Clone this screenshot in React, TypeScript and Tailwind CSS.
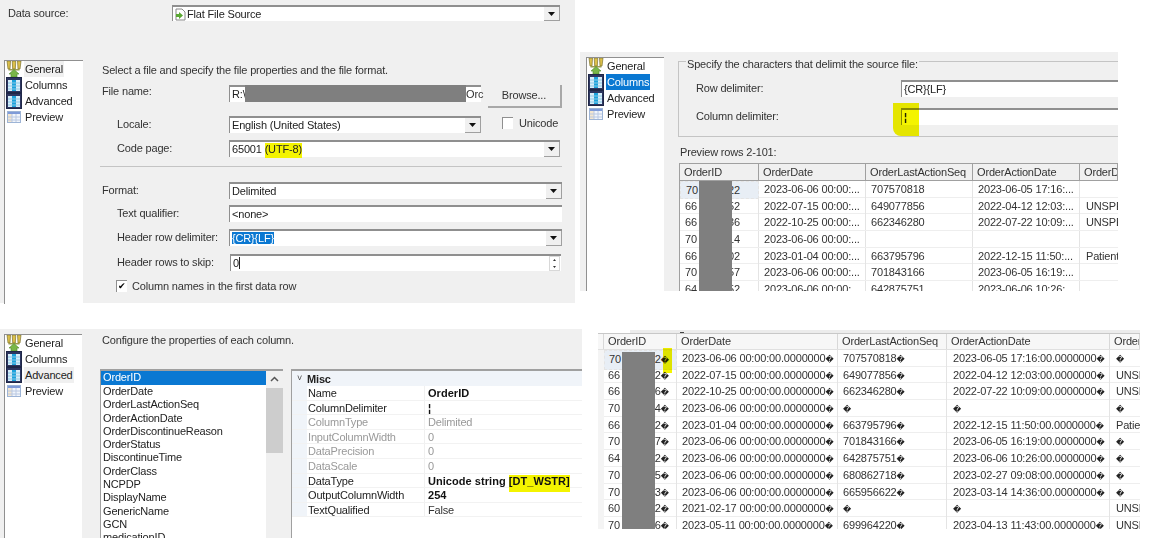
import type { ReactNode } from 'react'

const font = "font-['Liberation_Sans',Arial,sans-serif]"

function GeneralIcon() {
  return (
    <svg width="16" height="16" viewBox="0 0 16 16" className="shrink-0">
      <path d="M1 0h3.500l-.5 8H2zM6.200 0h3.600l-.5 8H6.700zM11.500 0H15l-1 8h-2z" fill="#dcc04a" stroke="#7d7330" strokeWidth="0.7" />
      <path d="M2.500 8h11v1.500h-11z" fill="#9a9a50" />
      <path d="M5 16v-3H3l5-4.500 5 4.500h-2v3z" fill="#7ab648" stroke="#4f8a2a" strokeWidth="0.6" />
    </svg>
  )
}

function ColumnsIcon() {
  return (
    <svg width="16" height="16" viewBox="0 0 16 16" className="shrink-0">
      <rect x="0.500" y="0.500" width="15" height="15" fill="#2d3660" stroke="#1f2747" />
      <rect x="2" y="3" width="12" height="11" fill="#d9eef9" />
      <rect x="6" y="3" width="4" height="11" fill="#1ba3dc" />
      <path d="M2 6h12M2 9h12M2 12h12" stroke="#8cc9e6" strokeWidth="1" />
    </svg>
  )
}

function PreviewIcon() {
  return (
    <svg width="16" height="16" viewBox="0 0 16 16" className="shrink-0">
      <rect x="1.500" y="2.500" width="13" height="11" fill="#f1f5fb" stroke="#9db4d6" />
      <rect x="2" y="3" width="12" height="2" fill="#7f9bd8" />
      <rect x="2" y="5" width="4" height="8" fill="#f3e6cf" />
      <path d="M2 8h12M2 11h12M6 5v8M10 5v8" stroke="#b9c8e2" strokeWidth="1" />
    </svg>
  )
}

function Sidebar({ active, hover, className }: { active?: string; hover?: string; className: string }) {
  const items: [string, ReactNode][] = [
    ['General', <GeneralIcon />],
    ['Columns', <ColumnsIcon />],
    ['Advanced', <ColumnsIcon />],
    ['Preview', <PreviewIcon />],
  ]
  return (
    <div className={`bg-white border-t border-l border-[#909090] ${className}`}>
      {items.map(([name, icon]) => (
        <div key={name} className="flex items-center h-4 pl-[1px]">
          {icon}
          <span
            className={`ml-[2px] px-[1px] leading-4 ${
              name === active ? 'bg-[#0a78d2] text-white' : name === hover ? 'bg-[#f0f0f0] text-[#222]' : 'text-[#222]'
            }`}
          >
            {name}
          </span>
        </div>
      ))}
    </div>
  )
}

function Arrow() {
  return (
    <span className="w-[16px] self-stretch flex items-center justify-center bg-[#f0f0f0] border-r border-b border-[#a0a0a0] shrink-0">
      <svg width="7" height="4" viewBox="0 0 7 4">
        <path d="M0 0h7L3.500 4z" fill="#111" />
      </svg>
    </span>
  )
}

function Spinner() {
  return (
    <span className="w-[11px] mr-[1px] self-stretch flex flex-col items-center justify-around border border-[#d8d8d8] shrink-0">
      <svg width="3" height="2" viewBox="0 0 3 2">
        <path d="M0 2h3L1.500 0z" fill="#333" />
      </svg>
      <svg width="3" height="2" viewBox="0 0 3 2">
        <path d="M0 0h3L1.500 2z" fill="#333" />
      </svg>
    </span>
  )
}

function Field({ children, className, arrow, spin }: { children?: ReactNode; className: string; arrow?: boolean; spin?: boolean }) {
  return (
    <div className={`flex items-center h-[17px] bg-white border-t-2 border-l border-[#8f8f8f] ${className}`}>
      <div className="flex-1 pl-[2px] whitespace-nowrap overflow-hidden text-[#222]">{children}</div>
      {arrow && <Arrow />}
      {spin && <Spinner />}
    </div>
  )
}

function FormRow({ label, indent, className, labelClass, children }: { label: string; indent?: boolean; className: string; labelClass?: string; children: ReactNode }) {
  return (
    <div className={`flex items-center ${className}`}>
      <span className={`w-[127px] shrink-0 text-[#333] ${indent ? 'pl-[15px]' : ''} ${labelClass ?? ''}`}>{label}</span>
      {children}
    </div>
  )
}

function GeneralPanel() {
  return (
    <div className="absolute left-0 top-0 w-[575px] h-[303px] bg-[#f0f0f0]">
      <div className="flex items-center pl-[8px] pt-[5px]">
        <span className="w-[164px] text-[#333]">Data source:</span>
        <div className="flex items-center w-[388px] h-[16px] bg-white border-t-2 border-l border-[#8f8f8f]">
          <svg width="13" height="13" viewBox="0 0 13 13" className="ml-[1px] shrink-0">
            <path d="M2 1h6l3 3v8H2z" fill="#fff" stroke="#888" />
            <path d="M5 4v2H2v3h3v2l4-3.500z" fill="#5aa832" />
          </svg>
          <span className="flex-1 pl-0 text-[#222]">Flat File Source</span>
          <Arrow />
        </div>
      </div>
      <div className="flex mt-[38px] pl-[4px]">
        <Sidebar hover="General" className="w-[79px] h-[244px]" />
        <div className="flex-1 pl-[19px]">
          <p className="mt-[2px] text-[#333]">Select a file and specify the file properties and the file format.</p>
          <FormRow label="File name:" labelClass="pb-[4px]" className="mt-[7px] h-[17px]">
            <div className="relative">
              <Field className="w-[252px]">R:\</Field>
              <div className="absolute left-[16px] top-0 w-[221px] h-[17px] bg-[#7f7f7f]" />
              <span className="absolute left-[237px] top-[2px] leading-[15px] text-[#333]">Orc</span>
            </div>
            <button className="ml-[7px] w-[74px] h-[23px] self-start bg-[#f0f0f0] border-r-2 border-b-2 border-[#a8a8a8] text-[#333]">
              Browse...
            </button>
          </FormRow>
          <FormRow label="Locale:" indent className="mt-[14px] h-[17px]">
            <Field arrow className="w-[252px]">English (United States)</Field>
            <span className="ml-[21px] mb-[3px] w-[11px] h-[12px] bg-white border-t border-l border-[#8f8f8f]" />
            <span className="ml-[6px] mb-[2px] text-[#333]">Unicode</span>
          </FormRow>
          <FormRow label="Code page:" indent className="mt-[7px] h-[17px]">
            <Field arrow className="w-[331px]">
              65001 <span className="bg-[#f4f400] pb-[3px]">(UTF-8)</span>
            </Field>
          </FormRow>
          <div className="mt-[9px] w-[462px] -ml-[2px] border-t border-[#c4c4c4]" />
          <FormRow label="Format:" className="mt-[15px] h-[17px]">
            <Field arrow className="w-[333px]">Delimited</Field>
          </FormRow>
          <FormRow label="Text qualifier:" indent className="mt-[6px] h-[17px]">
            <Field className="w-[333px]">&lt;none&gt;</Field>
          </FormRow>
          <FormRow label="Header row delimiter:" indent className="mt-[7px] h-[17px]">
            <Field arrow className="w-[333px]">
              <span className="bg-[#0a78d2] text-white">{'{CR}{LF}'}</span>
            </Field>
          </FormRow>
          <FormRow label="Header rows to skip:" indent className="mt-[8px] h-[17px]">
            <Field spin className="w-[331px] ml-[1px]">
              0<span className="border-l border-[#222]" />
            </Field>
          </FormRow>
          <div className="flex items-center mt-[7px] ml-[14px]">
            <span className="flex items-center justify-center w-[11px] h-[12px] bg-white border-t border-l border-[#8f8f8f] text-[9px] leading-none">
              ✔
            </span>
            <span className="ml-[5px] text-[#333]">Column names in the first data row</span>
          </div>
        </div>
      </div>
    </div>
  )
}

const previewRows = [
  ['70', '22', '2023-06-06 00:00:...', '707570818', '2023-06-05 17:16:...', ''],
  ['66', '52', '2022-07-15 00:00:...', '649077856', '2022-04-12 12:03:...', 'UNSPE'],
  ['66', '36', '2022-10-25 00:00:...', '662346280', '2022-07-22 10:09:...', 'UNSPE'],
  ['70', '14', '2023-06-06 00:00:...', '', '', ''],
  ['66', '02', '2023-01-04 00:00:...', '663795796', '2022-12-15 11:50:...', 'Patient'],
  ['70', '57', '2023-06-06 00:00:...', '701843166', '2023-06-05 16:19:...', ''],
  ['64', '52', '2023-06-06 00:00:...', '642875751', '2023-06-06 10:26:...', ''],
]

function ColumnsPanel() {
  return (
    <div className="absolute left-[580px] top-[52px] w-[538px] h-[239px] bg-[#f0f0f0] overflow-hidden">
      <div className="flex pl-[6px] pt-[5px]">
        <Sidebar active="Columns" className="w-[78px] h-[246px]" />
        <div className="flex-1 min-w-0 pl-[14px]">
          <div className="relative mt-[4px] h-[76px] border-t border-l border-b border-[#c4c4c4]">
            <span className="absolute left-[7px] -top-[4px] bg-[#f0f0f0] px-[1px] leading-[12px] text-[#333]">
              Specify the characters that delimit the source file:
            </span>
            <div className="flex items-center mt-[18px] pl-[17px] h-[17px]">
              <span className="w-[205px] text-[#333]">Row delimiter:</span>
              <Field className="flex-1">{'{CR}{LF}'}</Field>
            </div>
            <div className="flex items-center mt-[11px] pl-[17px] h-[17px]">
              <span className="w-[205px] text-[#333]">Column delimiter:</span>
              <Field className="flex-1">
                <span className="font-bold">¦</span>
              </Field>
            </div>
            <div className="absolute left-[214px] top-[41px] w-[26px] h-[33px] bg-[#f4f400] mix-blend-multiply rounded-bl-[8px]" />
          </div>
          <p className="mt-[9px] ml-[2px] leading-[13px] text-[#333]">Preview rows 2-101:</p>
          <div className="relative mt-[4px] ml-[1px] border-t border-l border-[#a0a0a0] bg-white">
            <div className="grid grid-cols-[79px_107px_107px_107px_1fr] h-[17px] bg-[#f0f0f0] border-b border-[#a0a0a0] text-[#333]">
              {['OrderID', 'OrderDate', 'OrderLastActionSeq', 'OrderActionDate', 'OrderD'].map((h) => (
                <div key={h} className="pl-[4px] border-r border-[#a0a0a0] leading-[16px] overflow-hidden whitespace-nowrap">
                  {h}
                </div>
              ))}
            </div>
            {previewRows.map((r, i) => (
              <div key={i} className="grid grid-cols-[79px_107px_107px_107px_1fr] h-[16.700px] border-b border-[#eeeeee] text-[#333] leading-[16px]">
                <div className={`flex justify-between pl-[5px] pr-[18px] border-r border-[#e4e4e4] ${i === 0 ? 'bg-[#e8eef5] border border-dashed border-[#777]' : ''}`}>
                  <span>{r[0]}</span>
                  <span>{r[1]}</span>
                </div>
                <div className="pl-[5px] border-r border-[#e4e4e4] whitespace-nowrap overflow-hidden">{r[2]}</div>
                <div className="pl-[5px] border-r border-[#e4e4e4]">{r[3]}</div>
                <div className="pl-[5px] border-r border-[#e4e4e4] whitespace-nowrap overflow-hidden">{r[4]}</div>
                <div className="pl-[6px] whitespace-nowrap overflow-hidden">{r[5]}</div>
              </div>
            ))}
            <div className="absolute left-[19px] top-[17px] w-[33px] h-[120px] bg-[#7f7f7f]" />
          </div>
        </div>
      </div>
    </div>
  )
}

const columnNames = [
  'OrderID',
  'OrderDate',
  'OrderLastActionSeq',
  'OrderActionDate',
  'OrderDiscontinueReason',
  'OrderStatus',
  'DiscontinueTime',
  'OrderClass',
  'NCPDP',
  'DisplayName',
  'GenericName',
  'GCN',
  'medicationID',
]

const props: [string, ReactNode, string, string][] = [
  ['Name', 'OrderID', 'text-[#222]', 'font-bold text-[#111] tracking-[0.05px]'],
  ['ColumnDelimiter', '¦', 'text-[#222]', 'font-bold text-[#111]'],
  ['ColumnType', 'Delimited', 'text-[#999]', 'text-[#999]'],
  ['InputColumnWidth', '0', 'text-[#999]', 'text-[#999]'],
  ['DataPrecision', '0', 'text-[#999]', 'text-[#999]'],
  ['DataScale', '0', 'text-[#999]', 'text-[#999]'],
  [
    'DataType',
    <>
      Unicode string <span className="bg-[#f4f400] pb-[5px]">[DT_WSTR]</span>
    </>,
    'text-[#222]',
    'font-bold text-[#111] tracking-[0.05px]',
  ],
  ['OutputColumnWidth', '254', 'text-[#222]', 'font-bold text-[#111] tracking-[0.05px]'],
  ['TextQualified', 'False', 'text-[#222]', 'text-[#333]'],
]

function AdvancedPanel() {
  return (
    <div className="absolute left-0 top-[329px] w-[582px] h-[209px] bg-[#f0f0f0] overflow-hidden">
      <div className="flex pl-[4px] pt-[5px]">
        <Sidebar hover="Advanced" className="w-[78px] h-[204px]" />
        <div className="flex-1 min-w-0 pl-[18px]">
          <p className="ml-[2px] leading-[13px] text-[#333]">Configure the properties of each column.</p>
          <div className="flex mt-[22px] gap-[8px] h-[171px]">
            <div className="w-[183px] flex bg-white border-t-2 border-l border-[#a0a0a0] overflow-hidden">
              <div className="flex-1 min-w-0">
                {columnNames.map((name, i) => (
                  <div key={name} className={`h-[13.300px] leading-[13px] pl-[2px] ${i === 0 ? 'bg-[#0a78d2] text-white h-[14px]' : 'text-[#222]'}`}>
                    {name}
                  </div>
                ))}
              </div>
              <div className="w-[17px] bg-[#f0f0f0] shrink-0">
                <svg width="17" height="17" viewBox="0 0 17 17">
                  <path d="M5 10l3.500-3.500L12 10" fill="none" stroke="#555" strokeWidth="1.500" />
                </svg>
                <div className="h-[65px] bg-[#cdcdcd]" />
              </div>
            </div>
            <div className="flex-1 bg-white border-t-2 border-l border-[#a0a0a0] overflow-hidden">
              <div className="flex h-[15px] pt-[1px] bg-[#f0f4f9] items-center">
                <span className="w-[15px] text-center text-[9px] text-[#444]">˅</span>
                <span className="font-bold text-[#222]">Misc</span>
              </div>
              {props.map(([name, value, nameCls, valueCls]) => (
                <div key={name} className="flex h-[14.600px] leading-[14px] border-b border-[#f2f2f2]">
                  <span className="w-[15px] bg-[#f0f4f9] shrink-0" />
                  <span className={`w-[118px] pl-[1px] border-r border-[#f0f0f0] ${nameCls}`}>{name}</span>
                  <span className={`pl-[3px] whitespace-nowrap ${valueCls}`}>{value}</span>
                </div>
              ))}
            </div>
          </div>
        </div>
      </div>
    </div>
  )
}

function Bad() {
  return <span className="font-['DejaVu_Sans'] text-[8px] text-[#222] tracking-normal">{'\uFFFD'}</span>
}

const dataRows = [
  ['70', '22', '2023-06-06 00:00:00.0000000', '707570818', '2023-06-05 17:16:00.0000000', ''],
  ['66', '52', '2022-07-15 00:00:00.0000000', '649077856', '2022-04-12 12:03:00.0000000', 'UNSPECIFIED'],
  ['66', '36', '2022-10-25 00:00:00.0000000', '662346280', '2022-07-22 10:09:00.0000000', 'UNSPECIFIED'],
  ['70', '14', '2023-06-06 00:00:00.0000000', '', '', ''],
  ['66', '02', '2023-01-04 00:00:00.0000000', '663795796', '2022-12-15 11:50:00.0000000', 'Patient'],
  ['70', '67', '2023-06-06 00:00:00.0000000', '701843166', '2023-06-05 16:19:00.0000000', ''],
  ['64', '52', '2023-06-06 00:00:00.0000000', '642875751', '2023-06-06 10:26:00.0000000', ''],
  ['70', '45', '2023-06-06 00:00:00.0000000', '680862718', '2023-02-27 09:08:00.0000000', ''],
  ['70', '23', '2023-06-06 00:00:00.0000000', '665956622', '2023-03-14 14:36:00.0000000', ''],
  ['60', '22', '2021-02-17 00:00:00.0000000', '', '', 'UNSPECIFIED'],
  ['70', '96', '2023-05-11 00:00:00.0000000', '699964220', '2023-04-13 11:43:00.0000000', 'UNSPECIFIED'],
]

function DataGrid() {
  return (
    <div className="absolute left-[598px] top-[330px] w-[542px] h-[199px] overflow-hidden bg-white">
      <div className="h-[4px] border-b border-[#c8c8c8] flex">
        <div className="w-[32px]" />
        <div className="flex-1 bg-[#ececec]">
          <div className="ml-[50px] mt-[2px] w-[4px] h-[1px] bg-[#444]" />
        </div>
      </div>
      <div className="relative">
        <div className="grid grid-cols-[6px_73px_161px_109px_163px_1fr] h-[16px] bg-[#f7f7f7] border-b border-[#e0e0e0] text-[#333] leading-[15px]">
          {['', 'OrderID', 'OrderDate', 'OrderLastActionSeq', 'OrderActionDate', 'Order'].map((h, i) => (
            <div key={i} className="pl-[4px] border-r border-[#d8d8d8] whitespace-nowrap overflow-hidden">
              {h}
            </div>
          ))}
        </div>
        {dataRows.map((r, i) => (
          <div key={i} className="grid grid-cols-[6px_73px_161px_109px_163px_1fr] h-[16.700px] border-b border-[#eeeeee] text-[#333] leading-[16px]">
            <div className="bg-[#f4f4f4]" />
            <div className={`flex justify-between pl-[4px] pr-[7px] border-r border-[#e4e4e4] ${i === 0 ? 'bg-[#e8eef5] border border-dashed border-[#777]' : ''}`}>
              <span>{r[0]}</span>
              <span>
                {r[1]}
                <Bad />
              </span>
            </div>
            <div className="pl-[5px] border-r border-[#e4e4e4] whitespace-nowrap overflow-hidden">
              {r[2]}
              <Bad />
            </div>
            <div className="pl-[5px] border-r border-[#e4e4e4] whitespace-nowrap">
              {r[3]}
              <Bad />
            </div>
            <div className="pl-[6px] border-r border-[#e4e4e4] whitespace-nowrap">
              {r[4]}
              <Bad />
            </div>
            <div className="pl-[6px] whitespace-nowrap overflow-hidden">{r[5] || <Bad />}</div>
          </div>
        ))}
        <div className="absolute left-[24px] top-[18px] w-[33px] h-[180px] bg-[#7f7f7f]" />
        <div className="absolute left-[65px] top-[14px] w-[9px] h-[25px] bg-[#f4f400] mix-blend-multiply" />
      </div>
    </div>
  )
}

export default function App() {
  return (
    <div className={`relative w-[1156px] h-[542px] bg-white overflow-hidden text-[11px] tracking-[-0.17px] ${font}`}>
      <GeneralPanel />
      <ColumnsPanel />
      <AdvancedPanel />
      <DataGrid />
    </div>
  )
}
